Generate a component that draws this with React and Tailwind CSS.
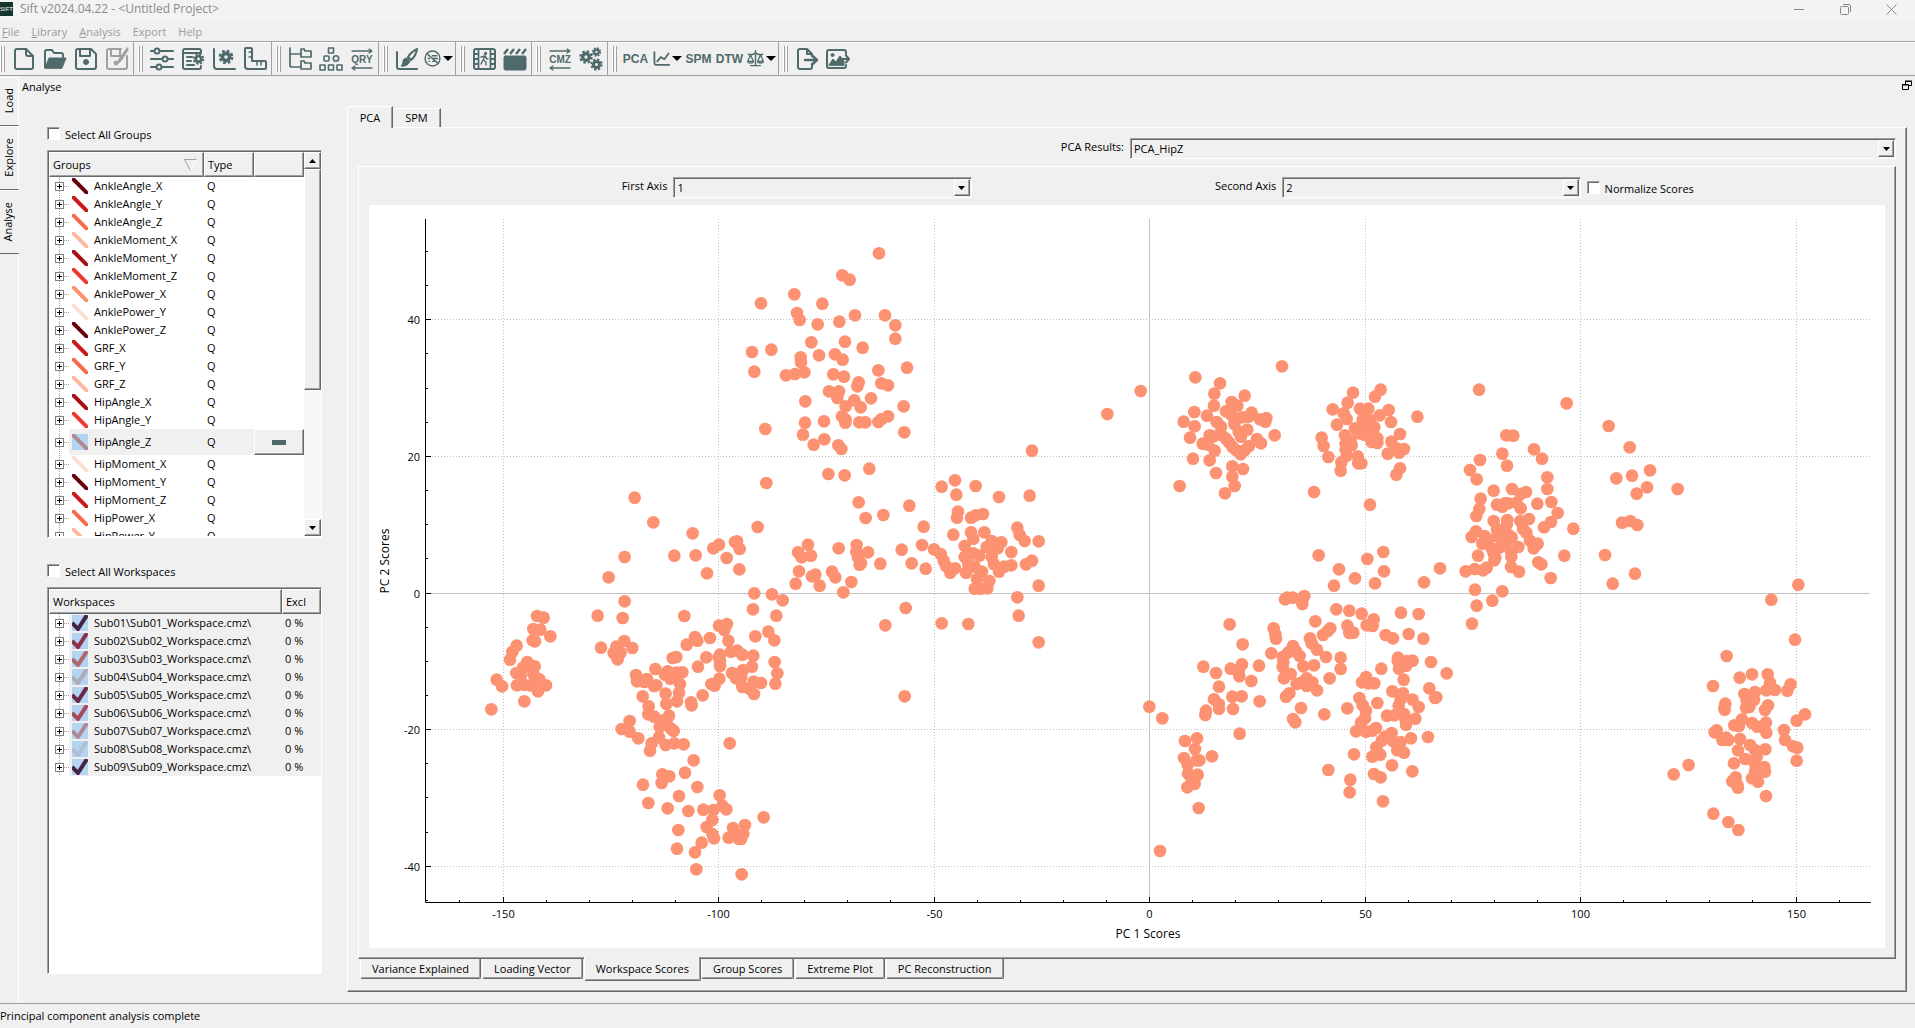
import { useState } from "react";
import clsx from "clsx";

const SUNKEN =
  "border border-t-[#a0a0a0] border-l-[#a0a0a0] border-r-white border-b-white shadow-[inset_1px_1px_#696969]";
const RAISED =
  "border border-t-white border-l-white border-r-[#696969] border-b-[#696969] shadow-[inset_-1px_-1px_#a0a0a0]";

const INK = "#4f6a6b";

const groups = [
  { name: "AnkleAngle_X", color: "#67000d" },
  { name: "AnkleAngle_Y", color: "#cb181d" },
  { name: "AnkleAngle_Z", color: "#fb6a4a" },
  { name: "AnkleMoment_X", color: "#fcbba1" },
  { name: "AnkleMoment_Y", color: "#a50f15" },
  { name: "AnkleMoment_Z", color: "#ef3b2c" },
  { name: "AnklePower_X", color: "#fc9272" },
  { name: "AnklePower_Y", color: "#fee0d2" },
  { name: "AnklePower_Z", color: "#67000d" },
  { name: "GRF_X", color: "#cb181d" },
  { name: "GRF_Y", color: "#fb6a4a" },
  { name: "GRF_Z", color: "#fcbba1" },
  { name: "HipAngle_X", color: "#a50f15" },
  { name: "HipAngle_Y", color: "#ef3b2c" },
  { name: "HipAngle_Z", color: "#ae8a90", selected: true },
  { name: "HipMoment_X", color: "#fee0d2" },
  { name: "HipMoment_Y", color: "#67000d" },
  { name: "HipMoment_Z", color: "#cb181d" },
  { name: "HipPower_X", color: "#fb6a4a" },
  { name: "HipPower_Y", color: "#fcbba1" },
];

const workspaces = [
  { name: "Sub01\\Sub01_Workspace.cmz\\", color: "#432346" },
  { name: "Sub02\\Sub02_Workspace.cmz\\", color: "#8e2f4e" },
  { name: "Sub03\\Sub03_Workspace.cmz\\", color: "#ad6873" },
  { name: "Sub04\\Sub04_Workspace.cmz\\", color: "#aeaab8" },
  { name: "Sub05\\Sub05_Workspace.cmz\\", color: "#6b2749" },
  { name: "Sub06\\Sub06_Workspace.cmz\\", color: "#a9495c" },
  { name: "Sub07\\Sub07_Workspace.cmz\\", color: "#ae8a95" },
  { name: "Sub08\\Sub08_Workspace.cmz\\", color: "#b0bfd5" },
  { name: "Sub09\\Sub09_Workspace.cmz\\", color: "#432346" },
];

// Score markers, one entry per tile of the canvas. "x y" pairs, in thirds of a unit.
const tiles = [
  {
    x: 111,
    y: 35,
    points:
      "1197 40,1087 106,1109 119,943 163,843 190,1027 191,951 219,959 240,1125 226,1215 226,1078 245,1013 253,1246 256,1246 296,994 307,1095 305,1148 323,816 336,874 329,1017 346,1065 343,1088 359,962 352,963 367,823 395,918 406,945 402,973 397,1060 403,1092 410,1195 391,1281 383,1136 427,1132 439,1204 430,1224 436,1047 454,1077 454,1072 474,1123 481,1173 475,976 484,1097 499,1142 502,1271 499,975 548,1032 544,1086 529,1097 539,1096 548,1138 547,1156 547,1195 546,1205 537,1224 529,856 567,969 584,1001 614,1033 598,1075 616,1084 627,1273 577,1045 702,1094 706,1168 686,859 729,464 773,520 847,638 880,833 861,1136 787,1157 834,1210 825,1288 797,1331 860,1385 740,1425 721,1429 764,1434 815,1431 833,1420 884",
  },
  {
    x: 111,
    y: 335,
    points:
      "434 51,386 112,583 47,647 46,681 100,700 25,717 14,740 54,765 6,771 4,779 27,778 88,954 37,965 52,984 14,993 47,1076 25,1130 15,1129 36,1134 52,1143 70,1139 74,1164 37,1201 71,957 94,947 131,996 109,1006 104,1019 137,1056 95,1066 112,1114 126,1090 157,823 160,876 163,908 181,819 208,889 227,434 184,428 234,353 227,613 228,1265 29,1295 70,1326 15,1337 86,1362 28,1382 42,1391 62,1398 78,1411 98,1425 85,1277 204,1216 256,1385 250,1274 469,171 228,191 233,160 267,181 269,211 289,158 301,165 304,110 317,97 336,90 359,142 366,164 379,130 382,109 399,122 408,160 402,178 418,50 419,66 439,111 436,132 434,150 436,174 454,198 436,133 484,34 508,363 323,409 320,433 303,457 324,401 339,422 338,411 352,413 358,468 405,471 424,501 417,493 426,526 387,522 438,529 436,488 469,506 499,563 394,555 404,575 400,590 398,607 397,571 416,590 412,600 432,597 459,591 484,557 461,559 492,578 354,589 351,620 314,645 291,652 302,690 294,679 352,654 380,668 466,633 487,635 496,717 257,741 252,733 270,745 302,720 344,716 352,720 362,720 378,718 416,694 432,704 437,753 335,772 332,787 344,820 347,816 380,789 390,756 399,776 404,768 415,784 412,787 441,821 425,843 429,809 446,822 462,826 289,865 275,883 301,884 366,892 400,886 431,505 523,523 530,567 527,449 543,425 567,449 575,475 595,545 542,539 560,562 555,573 566,581 573,537 592,515 610,510 632,557 615,583 610,611 613,641 661,615 698,547 703,568 709,545 729,489 734,652 741,597 768,505 789,563 805,625 813,670 809,700 810,719 766,727 797,739 808,749 610,697 840,680 861,697 882,702 895,851 832,795 855,759 864,746 893,770 885,790 882,776 896,783 897,595 870,591 926,665 908,645 937,649 988,785 1003",
  },
  {
    x: 591,
    y: 235,
    points:
      "47 138,117 171,209 167,216 32,47 226,69 222,33 233,33 277,73 277,40 296,95 303,124 307,113 325,172 263,179 285,194 303,236 304,14 318,14 351,40 340,58 347,80 321,95 351,18 398,44 380,66 395,51 417,25 373,102 373,117 395,132 380,154 376,198 373,216 362,44 446,62 446,82 445,88 423,172 472,176 527,25 552,236 437,236 607,154 336",
  },
  {
    x: 671,
    y: 135,
    points:
      "202 222,302 153,726 79,466 112,540 130,523 161,614 167,522 197,575 186,592 197,463 216,501 227,558 214,431 245,464 259,450 293,575 226,607 232,635 218,625 230,660 238,679 234,676 245,530 246,543 260,583 252,596 275,622 269,603 290,704 286,651 297,663 310,509 286,521 289,545 285,558 296,488 311,504 314,524 332,567 307,577 320,588 330,602 343,614 331,627 318,459 356,509 361,528 399,577 379,609 387,577 410,584 438,555 460,419 438,939 158,1022 149,1005 170,923 188,878 208,911 220,920 237,891 254,960 206,985 206,974 222,968 240,990 240,1019 226,1046 210,1053 246,1132 230,845 293,851 318,865 351,915 286,945 265,970 262,1003 262,960 280,975 285,985 270,1012 295,995 306,1012 309,932 300,917 312,935 316,917 330,920 347,904 367,902 392,953 349,955 370,964 370,1080 282,1054 305,1070 325,1092 327,1043 341,1077 338,1080 385,1069 404,822 456,990 494,836 646,897 688,945 715,882 737,982 657,1030 636,1032 694,1005 730,1200 685,1152 727",
  },
  {
    x: 751,
    y: 375,
    points:
      "495 58,501 53,518 53,553 48,547 72,649 88,688 92,725 101,761 118,740 136,758 138,843 98,896 102,329 133,368 193,461 145,466 163,468 176,454 220,586 124,609 165,623 153,631 145,682 137,688 159,700 158,797 165,819 175,866 162,910 176,570 175,575 190,591 209,519 198,505 217,528 214,539 228,488 231,490 245,488 261,512 282,492 295,550 259,582 256,618 231,662 233,662 267,629 295,560 295,545 307,530 312,560 318,577 307,591 331,508 340,498 350,543 384,519 417,526 427,613 403,682 385,250 260,288 279,332 266,366 253,356 273,358 289,394 303,417 257,297 320,282 358,296 372,297 386,337 350,365 349,339 387,419 364,258 392,256 405,88 380,127 415,359 461,195 483,231 475,225 507,192 534,203 554,238 541,230 541,276 529,204 581,233 584,224 612,202 622,215 598,236 684,120 813,834 233,833 242,860 243,878 242,858 258,837 266,784 266,933 246,980 280,851 299,738 291,726 307,745 310,763 310,817 334,849 340,842 358,836 377,928 325,949 352,945 354,718 354,728 376,738 392,735 415,723 428,708 454,738 455,768 444,757 452,772 369,878 359,896 381,886 416,801 407,823 406,852 402,857 420,858 434,815 459,795 470,785 482,820 484,842 486,769 502,873 475,924 471,832 511,852 518,757 530,781 524,702 523,625 570,691 599,689 637,762 582,782 592,816 556,877 574,789 664",
  },
  {
    x: 1031,
    y: 135,
    points:
      "237 149,500 190,626 258,319 286,340 287,307 341,321 377,402 328,426 356,240 360,210 390,230 418,442 412,442 447,689 322,649 415,696 407,750 391,741 442,710 461,833 447,281 452,336 447,378 456,362 462,242 476,238 507,229 528,291 494,307 500,315 490,325 490,350 488,362 505,412 491,454 486,473 519,281 543,322 540,321 551,361 543,387 537,453 546,432 562,520 566,228 574,215 591,254 588,247 611,265 600,291 568,292 588,316 572,326 585,335 592,369 567,379 578,390 602,401 625,413 611,320 605,355 621,300 622,275 625,281 640,286 653,283 661,333 635,334 650,234 647,197 694,224 687,249 691,260 683,333 681,357 695,415 667,424 673,493 647,452 714,225 749,307 754,277 782,230 797,216 851,666 548,691 543,712 555,615 645,705 701,638 731,1195 734,1114 779,1185 899,980 948",
  },
  {
    x: 1271,
    y: 355,
    points:
      "219 378,299 353,336 343,383 343,390 368,379 391,405 390,452 373,442 392,313 402,345 396,342 420,318 443,328 441,320 422,256 431,253 443,254 449,384 436,375 450,306 478,283 496,297 498,336 489,352 500,378 488,379 518,495 463,470 482,432 510,435 540,459 559,472 563,470 602,230 511,224 517,247 540,265 540,258 533,300 537,294 571,330 555,345 570,376 568,350 590,316 597,282 610,345 612,373 621,375 635,346 633,287 652,277 664,292 675,294 683,336 655,354 665,378 708,146 615,101 643,220 761,265 786,295 810",
  },
];

const toX = (v) => Math.round(780 + v * 4.31) + 0.5;
const toY = (v) => Math.floor(388 - v * 6.83) + 0.5;

const Icon = ({ children, size = 24, color = INK }) => (
  <svg
    width={size}
    height={size}
    viewBox="0 0 24 24"
    fill="none"
    stroke={color}
    strokeWidth="2"
    strokeLinecap="round"
    strokeLinejoin="round"
    aria-hidden="true"
  >
    {children}
  </svg>
);

const NewIcon = () => (
  <Icon>
    <path d="M5 2h9l7 7v11q0 2-2 2H5q-2 0-2-2V4q0-2 2-2z" />
    <path d="M14 2v5q0 2 2 2h5" />
  </Icon>
);

const OpenIcon = () => (
  <Icon>
    <path d="M2 20V5q0-2 2-2h5l2 3h7q2 0 2 2v2" />
    <path d="M2 21l4-10h17l-4 10z" fill={INK} strokeWidth="1" />
  </Icon>
);

const SaveIcon = () => (
  <Icon>
    <path d="M4 2h13l5 5v13q0 2-2 2H4q-2 0-2-2V4q0-2 2-2z" />
    <path d="M6 3v6h10V3" />
    <circle cx="12" cy="15" r="2.5" fill={INK} strokeWidth="1" />
  </Icon>
);

const SaveAsIcon = () => (
  <Icon color="#a0a0a0">
    <path d="M16 2H4q-2 0-2 2v16q0 2 2 2h16q2 0 2-2V9" />
    <path d="M6 3v6h9V3" />
    <circle cx="11" cy="16" r="2" fill="#a0a0a0" strokeWidth="1" />
    <path d="M22 1l-8 11-2 5 4-3 7-11z" fill="#a0a0a0" strokeWidth="1" />
  </Icon>
);

const SlidersIcon = () => (
  <Icon>
    <path d="M1 4h3m6 0h13M1 12h11m6 0h5M1 20h5m6 0h11" />
    <circle cx="7" cy="4" r="2.5" />
    <circle cx="15" cy="12" r="2.5" />
    <circle cx="9" cy="20" r="2.5" />
  </Icon>
);

const Gear = ({ cx, cy, r }) => (
  <g>
    <circle cx={cx} cy={cy} r={r} strokeWidth={r} />
    <circle
      cx={cx}
      cy={cy}
      r={r * 1.7}
      strokeWidth={r * 0.7}
      strokeLinecap="butt"
      strokeDasharray={`${r * 0.75} ${r * 0.585}`}
    />
  </g>
);

const FormGearIcon = () => (
  <Icon>
    <path d="M20 5V4q0-2-2-2H4Q2 2 2 4v16q0 2 2 2h14q2 0 2-2v-1" />
    <path d="M2 6h18M6 10h5M6 14h4M6 18h7" />
    <Gear cx={17.5} cy={12} r={2.8} />
  </Icon>
);

const AxisGearIcon = () => (
  <Icon>
    <path d="M2 2v17q0 3 3 3h18" />
    <Gear cx={14} cy={10} r={3.6} />
  </Icon>
);

const RulerIcon = () => (
  <Icon>
    <path d="M3 1h5q1 0 1 1v12h13q1 0 1 1v6q0 1-1 1H5q-3 0-3-3V2q0-1 1-1z" />
    <path d="M6 5h3M6 10h3M14 15v3M18 15v3" strokeWidth="1.500" />
  </Icon>
);

const TreeIcon = () => (
  <Icon>
    <path d="M2 1v17q0 2 2 2h8M2 7h10" strokeWidth="1.700" />
    <path d="M13 2h3l1 2h6v6H13zM13 14h3l1 2h6v6H13z" strokeWidth="1.700" />
  </Icon>
);

const NodesIcon = () => (
  <Icon>
    <g strokeWidth="1.600">
      <rect x="9.500" y="1" width="5" height="5" />
      <rect x="5" y="9" width="5" height="5" rx="1" />
      <circle cx="17" cy="11.500" r="2.700" />
      <rect x="1" y="18" width="5" height="5" />
      <rect x="9.500" y="18" width="5" height="5" />
      <rect x="18" y="18" width="5" height="5" />
    </g>
  </Icon>
);

const ArrowedText = ({ children }) => (
  <Icon>
    <path d="M2 4h20M19 2l3 2-3 2M22 21H2M5 19l-3 2 3 2" strokeWidth="1.300" />
    <text
      x="12"
      y="16"
      textAnchor="middle"
      fill={INK}
      stroke="none"
      className="font-['Liberation_Sans',sans-serif] text-[10px] font-bold"
    >
      {children}
    </text>
  </Icon>
);

const BrushIcon = () => (
  <Icon>
    <path d="M2 5v15q0 2 2 2h18" />
    <path d="M22 2q-6 3-9 8l3 3q5-4 6-11z" />
    <path d="M12 11q-4 0-4 4 0 2-2 4 7 1 9-5z" fill={INK} strokeWidth="1" />
  </Icon>
);

const ExcludeIcon = () => (
  <Icon size={17}>
    <circle cx="12" cy="12" r="10.500" />
    <path d="M4 5l16 14M7 8h1M12 8h6M6 12h2M12 12h7M7 16h1M12 16h3" />
  </Icon>
);

const FilmIcon = () => (
  <Icon>
    <rect x="2" y="2" width="21" height="20" rx="2" />
    <path d="M6.500 2v20M18.500 2v20M2 7h4M2 12h4M2 17h4M19 7h4M19 12h4M19 17h4" strokeWidth="1.800" />
    <path d="M13 9l-2 4 3 2v3M11 13l-2 4M9 10l4-1 2 3h1" strokeWidth="1.400" />
    <circle cx="13.500" cy="6.500" r="0.700" />
  </Icon>
);

const ClapperIcon = () => (
  <Icon>
    <rect x="1" y="9" width="22" height="14" rx="1.500" fill={INK} strokeWidth="1" />
    <path d="M1 7l4-5M7 7l4-5M13 7l4-5M19 7l4-5" strokeWidth="2.500" strokeLinecap="butt" />
  </Icon>
);

const GearsIcon = () => (
  <Icon>
    <Gear cx={7} cy={10} r={3.3} />
    <Gear cx={17.5} cy={5} r={2.3} />
    <Gear cx={17.5} cy={17.5} r={3} />
  </Icon>
);

const TrendIcon = () => (
  <Icon size={17}>
    <path d="M2 3v15q0 3 3 3h18" strokeWidth="2.500" />
    <path d="M6 16l5-6 5 3 6-8" strokeWidth="2.500" />
  </Icon>
);

const ScaleIcon = () => (
  <Icon size={17}>
    <path d="M12 1v20M5 22h14M2 6q5 2 10-2 5 4 10 2" />
    <path d="M5 7L1 16h8zM19 7l-4 9h8zM1 17q4 3 8 0M15 17q4 3 8 0" strokeWidth="1.800" />
  </Icon>
);

const ExportPageIcon = () => (
  <Icon>
    <path d="M17 17v3q0 2-2 2H5q-2 0-2-2V4q0-2 2-2h7l5 5v2M12 2v5h5" />
    <path d="M10 13h10M17 8.500l5 4.500-5 4.500" strokeWidth="2.500" />
  </Icon>
);

const ExportImageIcon = () => (
  <Icon>
    <path d="M20 7V5q0-2-2-2H3Q1 3 1 5v14q0 2 2 2h15q2 0 2-2v-1" />
    <path d="M3 18l4-6 3 3 4-6 4 5v4z" fill={INK} strokeWidth="1" />
    <circle cx="6.500" cy="8" r="1.500" fill={INK} strokeWidth="1" />
    <path d="M15 12h7M20 8.500l3 3.500-3 3.500" />
  </Icon>
);

const WordIcon = ({ children }) => (
  <span className="font-['Liberation_Sans',sans-serif] text-[12px] font-bold text-[#4f6a6b]">
    {children}
  </span>
);

const toolbars = [
  [
    { label: "New", icon: <NewIcon /> },
    { label: "Open", icon: <OpenIcon /> },
    { label: "Save", icon: <SaveIcon /> },
    { label: "Save as", icon: <SaveAsIcon />, disabled: true },
  ],
  [
    { label: "Settings", icon: <SlidersIcon /> },
    { label: "Form settings", icon: <FormGearIcon /> },
    { label: "Axis settings", icon: <AxisGearIcon /> },
    { label: "Measure", icon: <RulerIcon /> },
  ],
  [
    { label: "Tree", icon: <TreeIcon /> },
    { label: "Groups", icon: <NodesIcon /> },
    { label: "Query", icon: <ArrowedText>QRY</ArrowedText> },
  ],
  [
    { label: "Clean", icon: <BrushIcon /> },
    { label: "Exclude", icon: <ExcludeIcon />, menu: true },
  ],
  [
    { label: "Animation", icon: <FilmIcon /> },
    { label: "Video", icon: <ClapperIcon /> },
  ],
  [
    { label: "CMZ", icon: <ArrowedText>CMZ</ArrowedText> },
    { label: "Process", icon: <GearsIcon /> },
  ],
  [
    { label: "PCA", icon: <WordIcon>PCA</WordIcon> },
    { label: "Charts", icon: <TrendIcon />, menu: true },
    { label: "SPM", icon: <WordIcon>SPM</WordIcon> },
    { label: "DTW", icon: <WordIcon>DTW</WordIcon> },
    { label: "Compare", icon: <ScaleIcon />, menu: true },
  ],
  [
    { label: "Export page", icon: <ExportPageIcon /> },
    { label: "Export image", icon: <ExportImageIcon /> },
  ],
];

const TitleBar = () => (
  <header className="flex h-[21px] items-center bg-[#f3f3f3] pb-[3px] text-[#8a8a8a]">
    <span className="flex h-[14px] w-[13px] items-center justify-center bg-[#17352f] font-['Liberation_Sans',sans-serif] text-[6px] text-white">
      SIFT
    </span>
    <h1 className="ml-[7px] flex-1 text-[12px] leading-4">
      Sift v2024.04.22 - &lt;Untitled Project&gt;
    </h1>
    <div className="flex items-center pr-px">
      <button type="button" aria-label="Minimize" className="flex w-[46px] justify-center">
        <svg width="10" height="10" stroke="currentColor">
          <path d="M0 5.500h10" />
        </svg>
      </button>
      <button type="button" aria-label="Restore" className="flex w-[46px] justify-center">
        <svg width="11" height="11" fill="none" stroke="currentColor">
          <rect x="0.500" y="2.500" width="8" height="8" rx="1" />
          <path d="M3 0.500h6q1.500 0 1.500 1.500v6" />
        </svg>
      </button>
      <button type="button" aria-label="Close" className="flex w-[46px] justify-center">
        <svg width="11" height="11" stroke="currentColor">
          <path d="M0.500 0.500l10 10M10.500 0.500l-10 10" />
        </svg>
      </button>
    </div>
  </header>
);

const MenuBar = () => (
  <nav className="flex h-5 items-center gap-3 pt-px pl-[2px] text-[#9b9b9b]">
    <button type="button"><u>F</u>ile</button>
    <button type="button"><u>L</u>ibrary</button>
    <button type="button"><u>A</u>nalysis</button>
    <button type="button">Export</button>
    <button type="button">Help</button>
  </nav>
);

const Toolbar = () => (
  <div className="flex h-[35px] border-t border-b border-[#a0a0a0] shadow-[inset_0_1px_#fff]">
    {toolbars.map((bar, i) => (
      <div
        key={i}
        className={clsx(
          "flex items-center",
          i > 0 && "pl-1",
          i < toolbars.length - 1 && "border-r border-[#a0a0a0] pr-px"
        )}
      >
        <span className="mr-[3px] flex h-[26px] gap-px">
          <span className="w-[2px] border-r border-[#a0a0a0] bg-white" />
          <span className="w-[2px] border-r border-[#a0a0a0] bg-white" />
        </span>
        {bar.map((tool) => (
          <button
            key={tool.label}
            type="button"
            aria-label={tool.label}
            disabled={tool.disabled}
            className={clsx(
              "flex h-8 items-center justify-center",
              tool.menu ? "w-8 gap-[2px]" : "w-[31px]"
            )}
          >
            {tool.icon}
            {tool.menu && (
              <svg width="10" height="5" viewBox="0 0 10 5">
                <path d="M0 0h10L5 5z" />
              </svg>
            )}
          </button>
        ))}
      </div>
    ))}
  </div>
);

const SideTab = ({ children, selected, className }) => (
  <button
    type="button"
    className={clsx(
      "flex w-[19px] items-center justify-center border-b border-[#696969] shadow-[inset_0_1px_#fff]",
      selected ? "pr-[3px]" : "border-r border-r-white",
      className
    )}
  >
    <span className="rotate-180 [writing-mode:vertical-rl]">{children}</span>
  </button>
);

const Check = ({ id, label }) => (
  <div className="flex items-start">
    <input
      id={id}
      type="checkbox"
      className={clsx("h-[13px] w-[13px] appearance-none bg-white", SUNKEN)}
    />
    <label htmlFor={id} className="ml-[5px] leading-4">
      {label}
    </label>
  </div>
);

const Expander = ({ height = 18 }) => {
  const mid = Math.round(height / 2) + 0.5;
  return (
    <svg width="20" height={height} fill="none" stroke="#808080" className="shrink-0">
      <path d={`M10.500 0v${height}M15 ${mid}h5`} strokeDasharray="1 1" stroke="#a0a0a0" />
      <rect x="6.500" y={mid - 4} width="8" height="8" fill="#fff" />
      <path d={`M8 ${mid}h5M10.500 ${mid - 2.5}v5`} stroke="#000" />
    </svg>
  );
};

const HeadCell = ({ children, className }) => (
  <th className={clsx("h-[25px] bg-[#f0f0f0] pl-[3px] text-left font-normal", RAISED, className)}>
    {children}
  </th>
);

const ScrollButton = ({ up }) => (
  <button
    type="button"
    aria-label={up ? "Scroll up" : "Scroll down"}
    className={clsx("flex h-[17px] items-center justify-center bg-[#f0f0f0]", RAISED)}
  >
    <svg width="7" height="4" viewBox="0 0 7 4">
      <path d={up ? "M0 4h7L3.500 0z" : "M0 0h7L3.500 4z"} />
    </svg>
  </button>
);

const GroupList = () => (
  <div className={clsx("flex h-[388px] overflow-hidden bg-white pt-px pb-px pl-px", SUNKEN)}>
    <div className="flex-1 overflow-hidden">
      <table className="w-full table-fixed border-separate border-spacing-0">
        <colgroup>
          <col />
          <col className="w-[50px]" />
          <col className="w-[50px]" />
        </colgroup>
        <thead>
          <tr>
            <HeadCell>
              <span className="flex items-center justify-between pr-1.5">
                Groups
                <svg width="13" height="12" fill="none" stroke="#a0a0a0">
                  <path d="M12.500 0.500L6.500 11.500" stroke="#fff" />
                  <path d="M12.500 0.500H0.500L6.500 11.500" />
                </svg>
              </span>
            </HeadCell>
            <HeadCell>Type</HeadCell>
            <HeadCell aria-label="Actions" />
          </tr>
        </thead>
        <tbody>
          {groups.map((group) => (
            <tr key={group.name} className={group.selected ? "h-[26px]" : "h-[18px]"}>
              <td className="p-0">
                <div className="flex">
                  <Expander height={group.selected ? 26 : 18} />
                  <span
                    className={clsx(
                      "flex flex-1 items-center gap-1.5 pl-[3px]",
                      group.selected && "bg-[#f0f0f0]"
                    )}
                  >
                    <svg
                      width="16"
                      height="16"
                      className={group.selected ? "bg-[#b3d5f2]" : ""}
                    >
                      <path d="M1.500 1.500L14.500 14.500" stroke={group.color} strokeWidth="4" strokeLinecap="square" />
                    </svg>
                    {group.name}
                  </span>
                </div>
              </td>
              <td className={clsx("p-0 pl-[3px]", group.selected && "bg-[#f0f0f0]")}>Q</td>
              <td className="p-0">
                {group.selected && (
                  <button
                    type="button"
                    aria-label="Remove"
                    className={clsx("flex h-[26px] w-full items-center justify-center bg-[#f0f0f0]", RAISED)}
                  >
                    <span className="h-[5px] w-[14px] bg-[#4f6a6b]" />
                  </button>
                )}
              </td>
            </tr>
          ))}
        </tbody>
      </table>
    </div>
    <div className="flex w-[17px] flex-col bg-[#f8f8f8]">
      <ScrollButton up />
      <span className={clsx("h-[221px] bg-[#f0f0f0]", RAISED)} />
      <span className="flex-1" />
      <ScrollButton />
    </div>
  </div>
);

const WorkspaceList = () => (
  <div className={clsx("flex-1 bg-white pt-px pl-px", SUNKEN)}>
    <table className="w-full table-fixed border-separate border-spacing-0">
      <colgroup>
        <col />
        <col className="w-[39px]" />
      </colgroup>
      <thead>
        <tr>
          <HeadCell>Workspaces</HeadCell>
          <HeadCell>Excl</HeadCell>
        </tr>
      </thead>
      <tbody>
        {workspaces.map((ws) => (
          <tr key={ws.name} className="h-[18px]">
            <td className="p-0">
              <div className="flex">
                <Expander />
                <span className="flex flex-1 items-center gap-1.5 bg-[#f0f0f0] pl-[3px]">
                  <svg width="16" height="16" fill="none" className="bg-[#b3d5f2]">
                    <path d="M0 8l6 6L15 0" stroke={ws.color} strokeWidth="4" />
                  </svg>
                  {ws.name}
                </span>
              </div>
            </td>
            <td className="bg-[#f0f0f0] p-0 pl-[3px]">0 %</td>
          </tr>
        ))}
      </tbody>
    </table>
  </div>
);

const Combo = ({ id, options }) => (
  <div className="relative">
    <select
      id={id}
      className={clsx("h-[21px] w-full appearance-none bg-[#f0f0f0] pt-px pl-[3px] outline-none", SUNKEN)}
    >
      {options.map((option) => (
        <option key={option}>{option}</option>
      ))}
    </select>
    <span
      className={clsx(
        "pointer-events-none absolute top-[2px] right-[2px] flex h-[17px] w-4 items-center justify-center bg-[#f0f0f0]",
        RAISED
      )}
    >
      <svg width="7" height="4" viewBox="0 0 7 4">
        <path d="M0 0h7L3.500 4z" />
      </svg>
    </span>
  </div>
);

const ScorePlot = () => {
  const xTicks = [-150, -100, -50, 0, 50, 100, 150];
  const yTicks = [40, 20, 0, -20, -40];
  const xMinor = Array.from({ length: 33 }, (_, i) => -160 + i * 10);
  const yMinor = Array.from({ length: 20 }, (_, i) => -45 + i * 5);

  return (
    <svg viewBox="0 0 1516 743" className="block h-auto w-full bg-white text-[11px]" role="img" aria-label="PC scores">
      {xTicks.map((v) => (
        <path
          key={v}
          d={`M${toX(v)} 14V697`}
          stroke="#c3c3c3"
          strokeDasharray={v === 0 ? undefined : "1 2"}
        />
      ))}
      {yTicks.map((v) => (
        <path
          key={v}
          d={`M57 ${toY(v)}H1501`}
          stroke="#c3c3c3"
          strokeDasharray={v === 0 ? undefined : "1 2"}
        />
      ))}
      {tiles.map((tile) => (
        <g key={`${tile.x}-${tile.y}`} transform={`translate(${tile.x} ${tile.y}) scale(0.33333)`} fill="#fc9272">
          {tile.points.split(",").map((pair, i) => {
            const [cx, cy] = pair.split(" ");
            return <circle key={i} cx={cx} cy={cy} r="19" />;
          })}
        </g>
      ))}
      <path d="M56.500 14V697.500H1502" fill="none" stroke="#000" />
      {xMinor.map((v) => (
        <path key={v} d={`M${toX(v)} 697v${v % 50 ? -2 : -5}`} stroke="#000" />
      ))}
      {yMinor.map((v) => (
        <path key={v} d={`M57 ${toY(v)}h${v % 20 ? 2 : 5}`} stroke="#000" />
      ))}
      {xTicks.map((v) => (
        <text key={v} x={toX(v)} y="713" textAnchor="middle">
          {v}
        </text>
      ))}
      {yTicks.map((v) => (
        <text key={v} x="51" y={toY(v) + 4} textAnchor="end">
          {v}
        </text>
      ))}
      <text x="779" y="733" textAnchor="middle" className="text-[12px]">
        PC 1 Scores
      </text>
      <text transform="translate(20 356) rotate(-90)" textAnchor="middle" className="text-[12px]">
        PC 2 Scores
      </text>
    </svg>
  );
};

const plotTabs = [
  "Variance Explained",
  "Loading Vector",
  "Workspace Scores",
  "Group Scores",
  "Extreme Plot",
  "PC Reconstruction",
];

const ResultsPanel = () => {
  const [tab, setTab] = useState("Workspace Scores");

  return (
    <section className="flex min-w-0 flex-1 flex-col pt-2 pb-[11px]">
      <div className="flex h-[21px] items-end">
        <button
          type="button"
          className="relative z-10 -mb-px h-[22px] w-[46px] rounded-tl-[3px] border-t border-r border-l border-t-white border-r-[#696969] border-l-white bg-[#f0f0f0] shadow-[inset_-1px_0_#a0a0a0]"
        >
          PCA
        </button>
        <button
          type="button"
          className="h-[19px] w-12 border-t border-r border-t-white border-r-[#696969] shadow-[inset_-1px_0_#a0a0a0]"
        >
          SPM
        </button>
      </div>
      <div className={clsx("flex-1 p-2.5", RAISED)}>
        <div className="grid grid-cols-2 gap-1.5">
          <label htmlFor="results" className="text-right leading-[18px]">
            PCA Results:
          </label>
          <Combo id="results" options={["PCA_HipZ"]} />
        </div>
        <div className={clsx("mt-[7px] p-2.5", RAISED)}>
          <div className="mb-[7px] grid grid-cols-5 gap-1.5">
            <label htmlFor="first" className="text-right leading-[18px]">
              First Axis
            </label>
            <Combo id="first" options={["1", "2", "3"]} />
            <label htmlFor="second" className="text-right leading-[18px]">
              Second Axis
            </label>
            <Combo id="second" options={["2", "1", "3"]} />
            <div className="pt-1">
              <Check id="normalize" label="Normalize Scores" />
            </div>
          </div>
          <ScorePlot />
        </div>
        <div className="flex items-start pl-[2px]">
          {plotTabs.map((name) => (
            <button
              key={name}
              type="button"
              onClick={() => setTab(name)}
              className={clsx(
                "rounded-b-[2px] border-r border-b border-l border-r-[#696969] border-b-[#696969] border-l-white px-[11px] shadow-[inset_-1px_-1px_#a0a0a0]",
                name === tab ? "relative -mt-[2px] h-6 bg-[#f0f0f0]" : "mr-px h-5"
              )}
            >
              {name}
            </button>
          ))}
        </div>
      </div>
    </section>
  );
};

export default function App() {
  return (
    <div className="flex min-h-screen flex-col bg-[#f0f0f0] font-['Open_Sans','Noto_Sans',sans-serif] text-[11px] leading-4 text-black">
      <TitleBar />
      <MenuBar />
      <Toolbar />
      <main className="flex flex-1">
        <nav className="flex w-[19px] flex-col pt-px">
          <SideTab className="h-[49px]">Load</SideTab>
          <SideTab className="h-16">Explore</SideTab>
          <SideTab className="h-16" selected>
            Analyse
          </SideTab>
          <span className="flex-1 border-r border-white" />
        </nav>
        <div className="flex min-w-0 flex-1 flex-col">
          <div className="flex h-[22px] items-center justify-between px-[3px]">
            <h2>Analyse</h2>
            <button type="button" aria-label="Float" className="pb-1">
              <svg width="10" height="10" fill="none" stroke="#000">
                <path d="M3.500 4V1.500h6v4H7M3 1h7M0.500 4.500h6v5h-6zM0 5h7" />
              </svg>
            </button>
          </div>
          <div className="flex flex-1 gap-[25px] pr-2 pl-7">
            <aside className="flex w-[275px] flex-col pt-[29px] pb-[29px]">
              <div className="h-[23px]">
                <Check id="all-groups" label="Select All Groups" />
              </div>
              <GroupList />
              <div className="mt-[26px] h-[23px]">
                <Check id="all-workspaces" label="Select All Workspaces" />
              </div>
              <WorkspaceList />
            </aside>
            <ResultsPanel />
          </div>
        </div>
      </main>
      <footer className="h-[25px] border-t border-[#a0a0a0] pt-1">
        Principal component analysis complete
      </footer>
    </div>
  );
}
